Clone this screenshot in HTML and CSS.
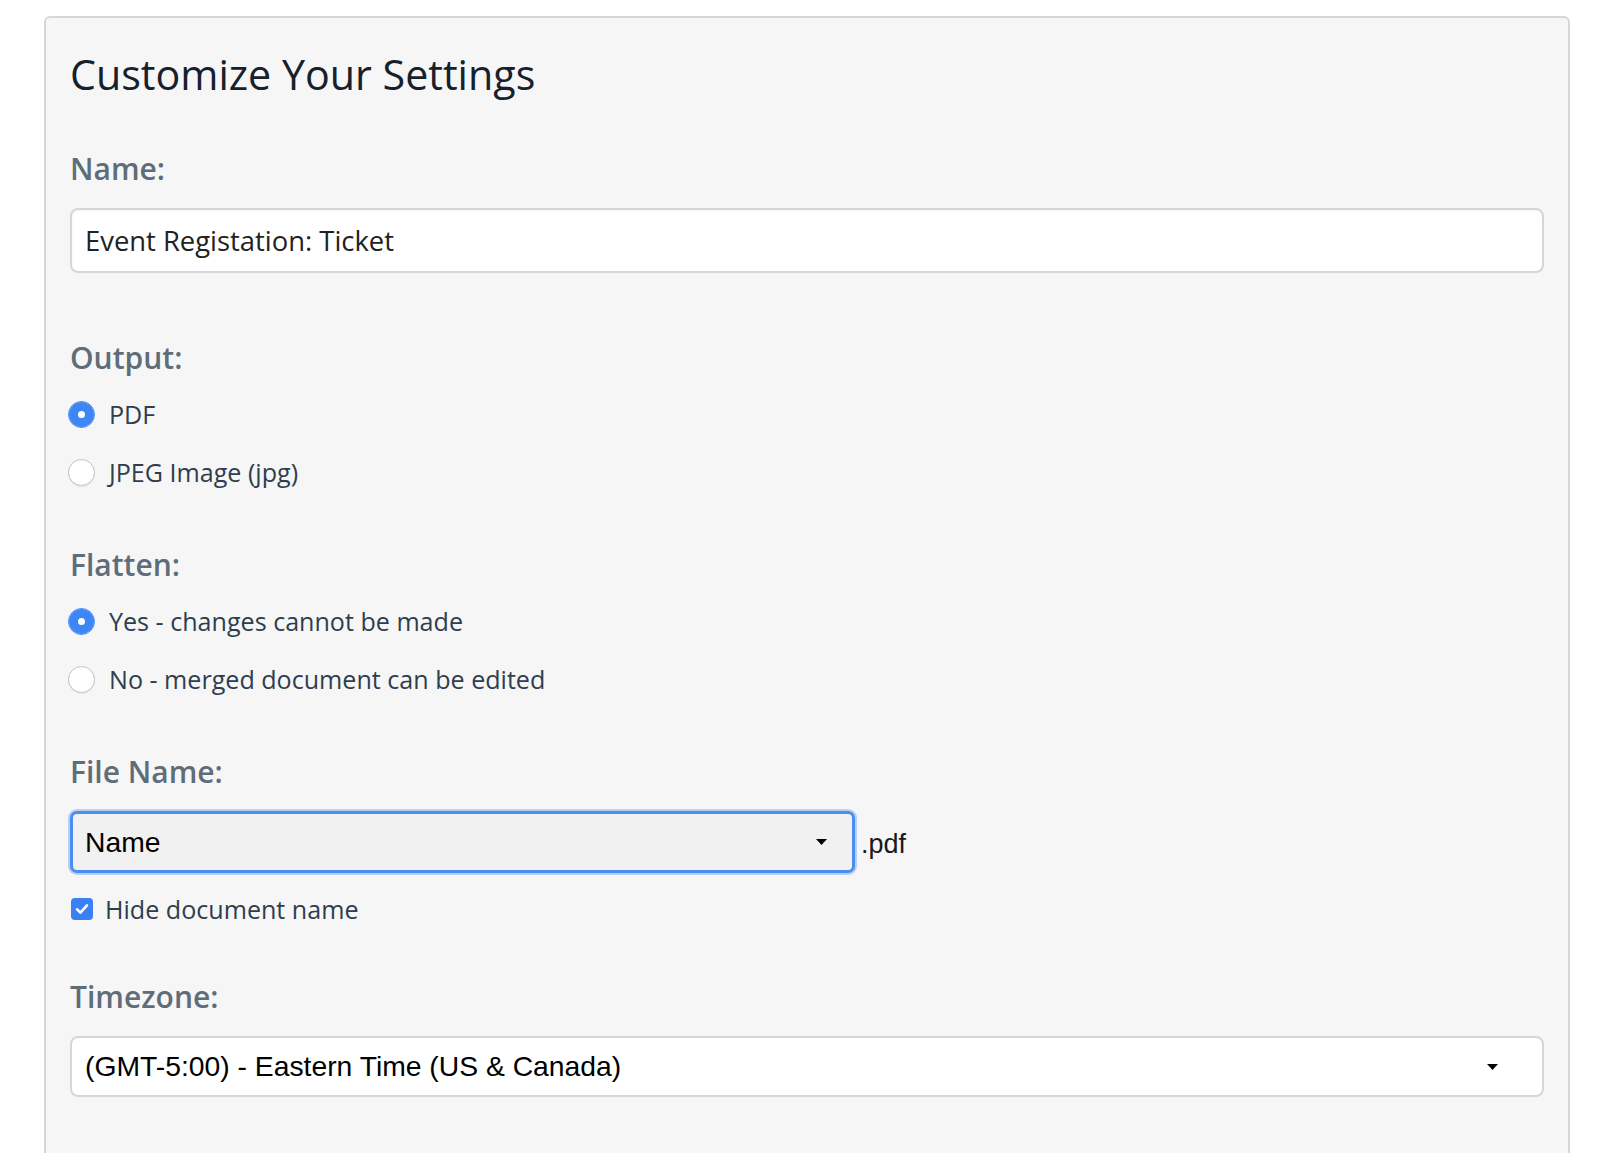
FILE: index.html
```html
<!DOCTYPE html>
<html lang="en">
<head>
<meta charset="utf-8">
<title>Customize Your Settings</title>
<link rel="stylesheet" href="styles.css">
</head>
<body>
<main class="panel">
  <h1 class="title">Customize Your Settings</h1>

  <section class="field field--first">
    <label class="field-label" for="name">Name:</label>
    <input class="text-input" id="name" type="text" value="Event Registation: Ticket">
  </section>

  <section class="field field--after-input">
    <div class="field-label field-label--group">Output:</div>
    <label class="option"><input class="radio" type="radio" name="output" checked><span>PDF</span></label>
    <label class="option"><input class="radio" type="radio" name="output"><span>JPEG Image (jpg)</span></label>
  </section>

  <section class="field field--after-group">
    <div class="field-label field-label--group">Flatten:</div>
    <label class="option"><input class="radio" type="radio" name="flatten" checked><span>Yes - changes cannot be made</span></label>
    <label class="option"><input class="radio" type="radio" name="flatten"><span>No - merged document can be edited</span></label>
  </section>

  <section class="field field--after-group">
    <div class="field-label">File Name:</div>
    <div class="file-row">
      <div class="select select--focused" role="combobox" aria-expanded="false">
        <span class="select-value">Name</span>
        <svg class="select-arrow" width="11" height="6" viewBox="0 0 11 6"><path d="M0 0H11L5.5 6Z" fill="#000"/></svg>
      </div>
      <span class="ext">.pdf</span>
    </div>
    <label class="check-row">
      <span class="checkbox"><svg width="14" height="12" viewBox="0 0 14 12"><path d="M2 6.3L5.4 9.6L12 2.4" fill="none" stroke="#fff" stroke-width="2.6" stroke-linecap="round" stroke-linejoin="round"/></svg></span>
      <span>Hide document name</span>
    </label>
  </section>

  <section class="field field--after-check">
    <div class="field-label">Timezone:</div>
    <div class="select select--wide" role="combobox" aria-expanded="false">
      <span class="select-value">(GMT-5:00) - Eastern Time (US &amp; Canada)</span>
      <svg class="select-arrow" width="11" height="6" viewBox="0 0 11 6"><path d="M0 0H11L5.5 6Z" fill="#000"/></svg>
    </div>
  </section>
</main>
</body>
</html>
```

FILE: styles.css
```css
html, body {
  margin: 0;
  padding: 0;
  background: #ffffff;
}

body {
  font-family: "Open Sans", "Noto Sans", sans-serif;
  overflow: hidden;
}

.panel {
  display: block;
  margin: 16px 30px 0 44px;
  box-sizing: border-box;
  border: 2px solid #d5d8db;
  border-radius: 6px;
  background: #f6f6f6;
  padding: 32px 24px 120px;
}

.title {
  margin: 0;
  font-size: 41.2px;
  line-height: 48px;
  font-weight: 400;
  color: #16212b;
}

.field--first { margin-top: 53px; }
.field--after-input { margin-top: 67px; }
.field--after-group { margin-top: 46px; }
.field--after-check { margin-top: 52px; }

.field-label {
  display: block;
  font-size: 30px;
  line-height: 36px;
  font-weight: 600;
  color: #5f6d79;
  margin-bottom: 21px;
}

.field-label--group {
  margin-bottom: 9px;
}

.text-input {
  display: block;
  width: 100%;
  box-sizing: border-box;
  height: 65px;
  margin: 0;
  padding: 0 13px;
  border: 2px solid #d3d7db;
  border-radius: 8px;
  background: #ffffff;
  box-shadow: inset 0 1px 2px rgba(0, 0, 0, 0.05);
  font-family: "Open Sans", sans-serif;
  font-size: 27.4px;
  color: #222222;
  outline: none;
}

.option {
  display: flex;
  align-items: center;
  gap: 14px;
  height: 58px;
  font-size: 25.1px;
  color: #2e3e4f;
}

.radio {
  appearance: none;
  -webkit-appearance: none;
  flex: none;
  margin: 0 0 0 -2px;
  width: 27px;
  height: 27px;
  box-sizing: border-box;
  border-radius: 50%;
  border: 1px solid #c2c2c2;
  background: #ffffff;
  box-shadow: 0 1px 1px rgba(0, 0, 0, 0.06);
}

.radio:checked {
  border-color: #3d86f6;
  box-shadow: inset 0 0 0 9px #3d86f6;
}

.file-row {
  display: flex;
  align-items: center;
  gap: 6px;
}

.select {
  display: flex;
  align-items: center;
  box-sizing: border-box;
  height: 62px;
  padding: 0 25px 0 13px;
  border: 2px solid #d3d7db;
  border-radius: 7px;
  background: #ffffff;
  font-family: "Liberation Sans", Arial, sans-serif;
  font-size: 28.3px;
  color: #000000;
}

.select--focused {
  width: 785px;
  border: 3px solid #4a8ef0;
  background: #f1f1f1;
  padding-left: 12px;
  box-shadow: 0 0 0 2px rgba(90, 150, 240, 0.4);
}

.select--wide {
  height: 61px;
  padding-right: 44px;
  border-radius: 8px;
}

.select-value {
  flex: 1;
  white-space: nowrap;
}

.select-arrow {
  flex: none;
  display: block;
}

.ext {
  font-family: "Liberation Sans", Arial, sans-serif;
  font-size: 27px;
  color: #1a1a1a;
  padding-top: 4px;
}

.check-row {
  display: flex;
  align-items: center;
  gap: 12px;
  height: 36px;
  margin-top: 18px;
  font-size: 25.1px;
  color: #2e3e4f;
}

.checkbox {
  flex: none;
  display: flex;
  align-items: center;
  justify-content: center;
  width: 22px;
  height: 22px;
  margin-left: 1px;
  border-radius: 4px;
  background: #3a80f6;
}
```
